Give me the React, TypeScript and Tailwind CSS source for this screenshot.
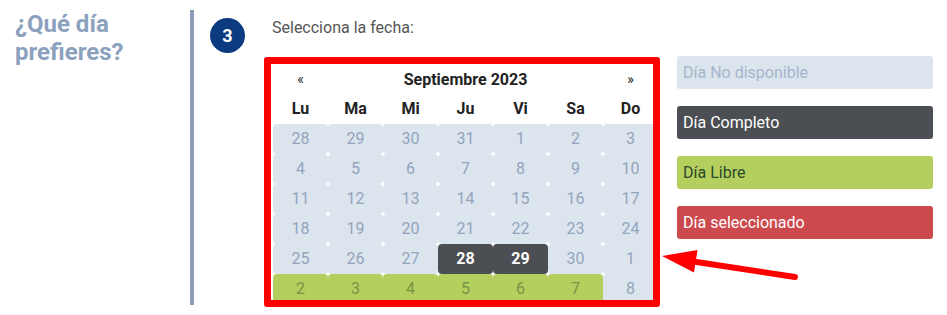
import React from "react";

type Cell = { d: number; t: "g" | "k" | "l" };

const rows: Cell[][] = [
  [28, 29, 30, 31, 1, 2, 3].map((d) => ({ d, t: "g" as const })),
  [4, 5, 6, 7, 8, 9, 10].map((d) => ({ d, t: "g" as const })),
  [11, 12, 13, 14, 15, 16, 17].map((d) => ({ d, t: "g" as const })),
  [18, 19, 20, 21, 22, 23, 24].map((d) => ({ d, t: "g" as const })),
  [
    { d: 25, t: "g" },
    { d: 26, t: "g" },
    { d: 27, t: "g" },
    { d: 28, t: "k" },
    { d: 29, t: "k" },
    { d: 30, t: "g" },
    { d: 1, t: "g" },
  ],
  [
    { d: 2, t: "l" },
    { d: 3, t: "l" },
    { d: 4, t: "l" },
    { d: 5, t: "l" },
    { d: 6, t: "l" },
    { d: 7, t: "l" },
    { d: 8, t: "g" },
  ],
];

const days = ["Lu", "Ma", "Mi", "Ju", "Vi", "Sa", "Do"];

function DayCell({ c }: { c: Cell }) {
  if (c.t === "k")
    return (
      <div className="h-[30px] flex items-center justify-center rounded-[4px] bg-[#4b4e53] text-white font-bold">
        {c.d}
      </div>
    );
  if (c.t === "l")
    return (
      <div className="h-[30px] flex items-center justify-center rounded-[4px] bg-[#b5cf5f] text-[#789448]">
        {c.d}
      </div>
    );
  return (
    <div className="h-[30px] flex items-center justify-center rounded-[4px] bg-[#dce4ee] text-[#92a5bd]">
      {c.d}
    </div>
  );
}

export default function App() {
  return (
    <div
      className="relative w-[947px] h-[315px] bg-white flex overflow-hidden"
      style={{ fontFamily: "Roboto, 'Liberation Sans', sans-serif" }}
    >
      <div className="w-[190px] pl-[15px] pt-[10px]">
        <h2 className="text-[24px] leading-[28px] font-bold text-[#8ba1bd]">
          ¿Qué día
          <br />
          prefieres?
        </h2>
      </div>
      <div className="w-[4px] mt-[10px] h-[295px] bg-[#8c9db5]" />
      <div className="w-[70px] pl-[16px] pt-[18px]">
        <div className="w-[35px] h-[35px] rounded-full bg-[#0d3b80] text-white font-bold text-[18px] flex items-center justify-center">
          3
        </div>
      </div>
      <div className="flex flex-col">
        <div className="pl-[8px] pt-[18px] h-[57px] text-[16px] leading-[20px] text-[#555]">
          Selecciona la fecha:
        </div>
        <div className="w-[396px] h-[250px] border-[7px] border-[#ff0000] rounded-[3px] overflow-hidden">
          <div className="w-[385px] ml-[2px] pt-[1px] grid grid-cols-7 text-[16px] text-[#222]">
            <div className="h-[29px] flex items-center justify-center text-[14px]">«</div>
            <div className="col-span-5 h-[29px] flex items-center justify-center font-bold">
              Septiembre 2023
            </div>
            <div className="h-[29px] flex items-center justify-center text-[14px]">»</div>
            {days.map((d) => (
              <div key={d} className="h-[30px] flex items-center justify-center font-bold">
                {d}
              </div>
            ))}
            {rows.map((r, i) =>
              r.map((c, j) => <DayCell key={`${i}-${j}`} c={c} />)
            )}
          </div>
        </div>
      </div>
      <div className="ml-[17px] pt-[56px] flex flex-col gap-[17px] w-[256px] text-[16px]">
        <div className="h-[33px] rounded-[3px] bg-[#dce4ee] text-[#a6b6ca] pl-[6px] flex items-center">
          Día No disponible
        </div>
        <div className="h-[33px] rounded-[3px] bg-[#4b4e53] text-white pl-[6px] flex items-center">
          Día Completo
        </div>
        <div className="h-[33px] rounded-[3px] bg-[#b5cf5f] text-[#2b4a2b] pl-[6px] flex items-center">
          Día Libre
        </div>
        <div className="h-[33px] rounded-[3px] bg-[#cc4a4e] text-white pl-[6px] flex items-center">
          Día seleccionado
        </div>
      </div>
      <svg
        className="absolute left-0 top-0 pointer-events-none"
        width="947"
        height="315"
        viewBox="0 0 947 315"
      >
        <line
          x1="795"
          y1="277"
          x2="690"
          y2="261"
          stroke="#ff0000"
          strokeWidth="6"
          strokeLinecap="round"
        />
        <polygon points="662,256 697.5,250 694,272.5" fill="#ff0000" />
      </svg>
    </div>
  );
}
